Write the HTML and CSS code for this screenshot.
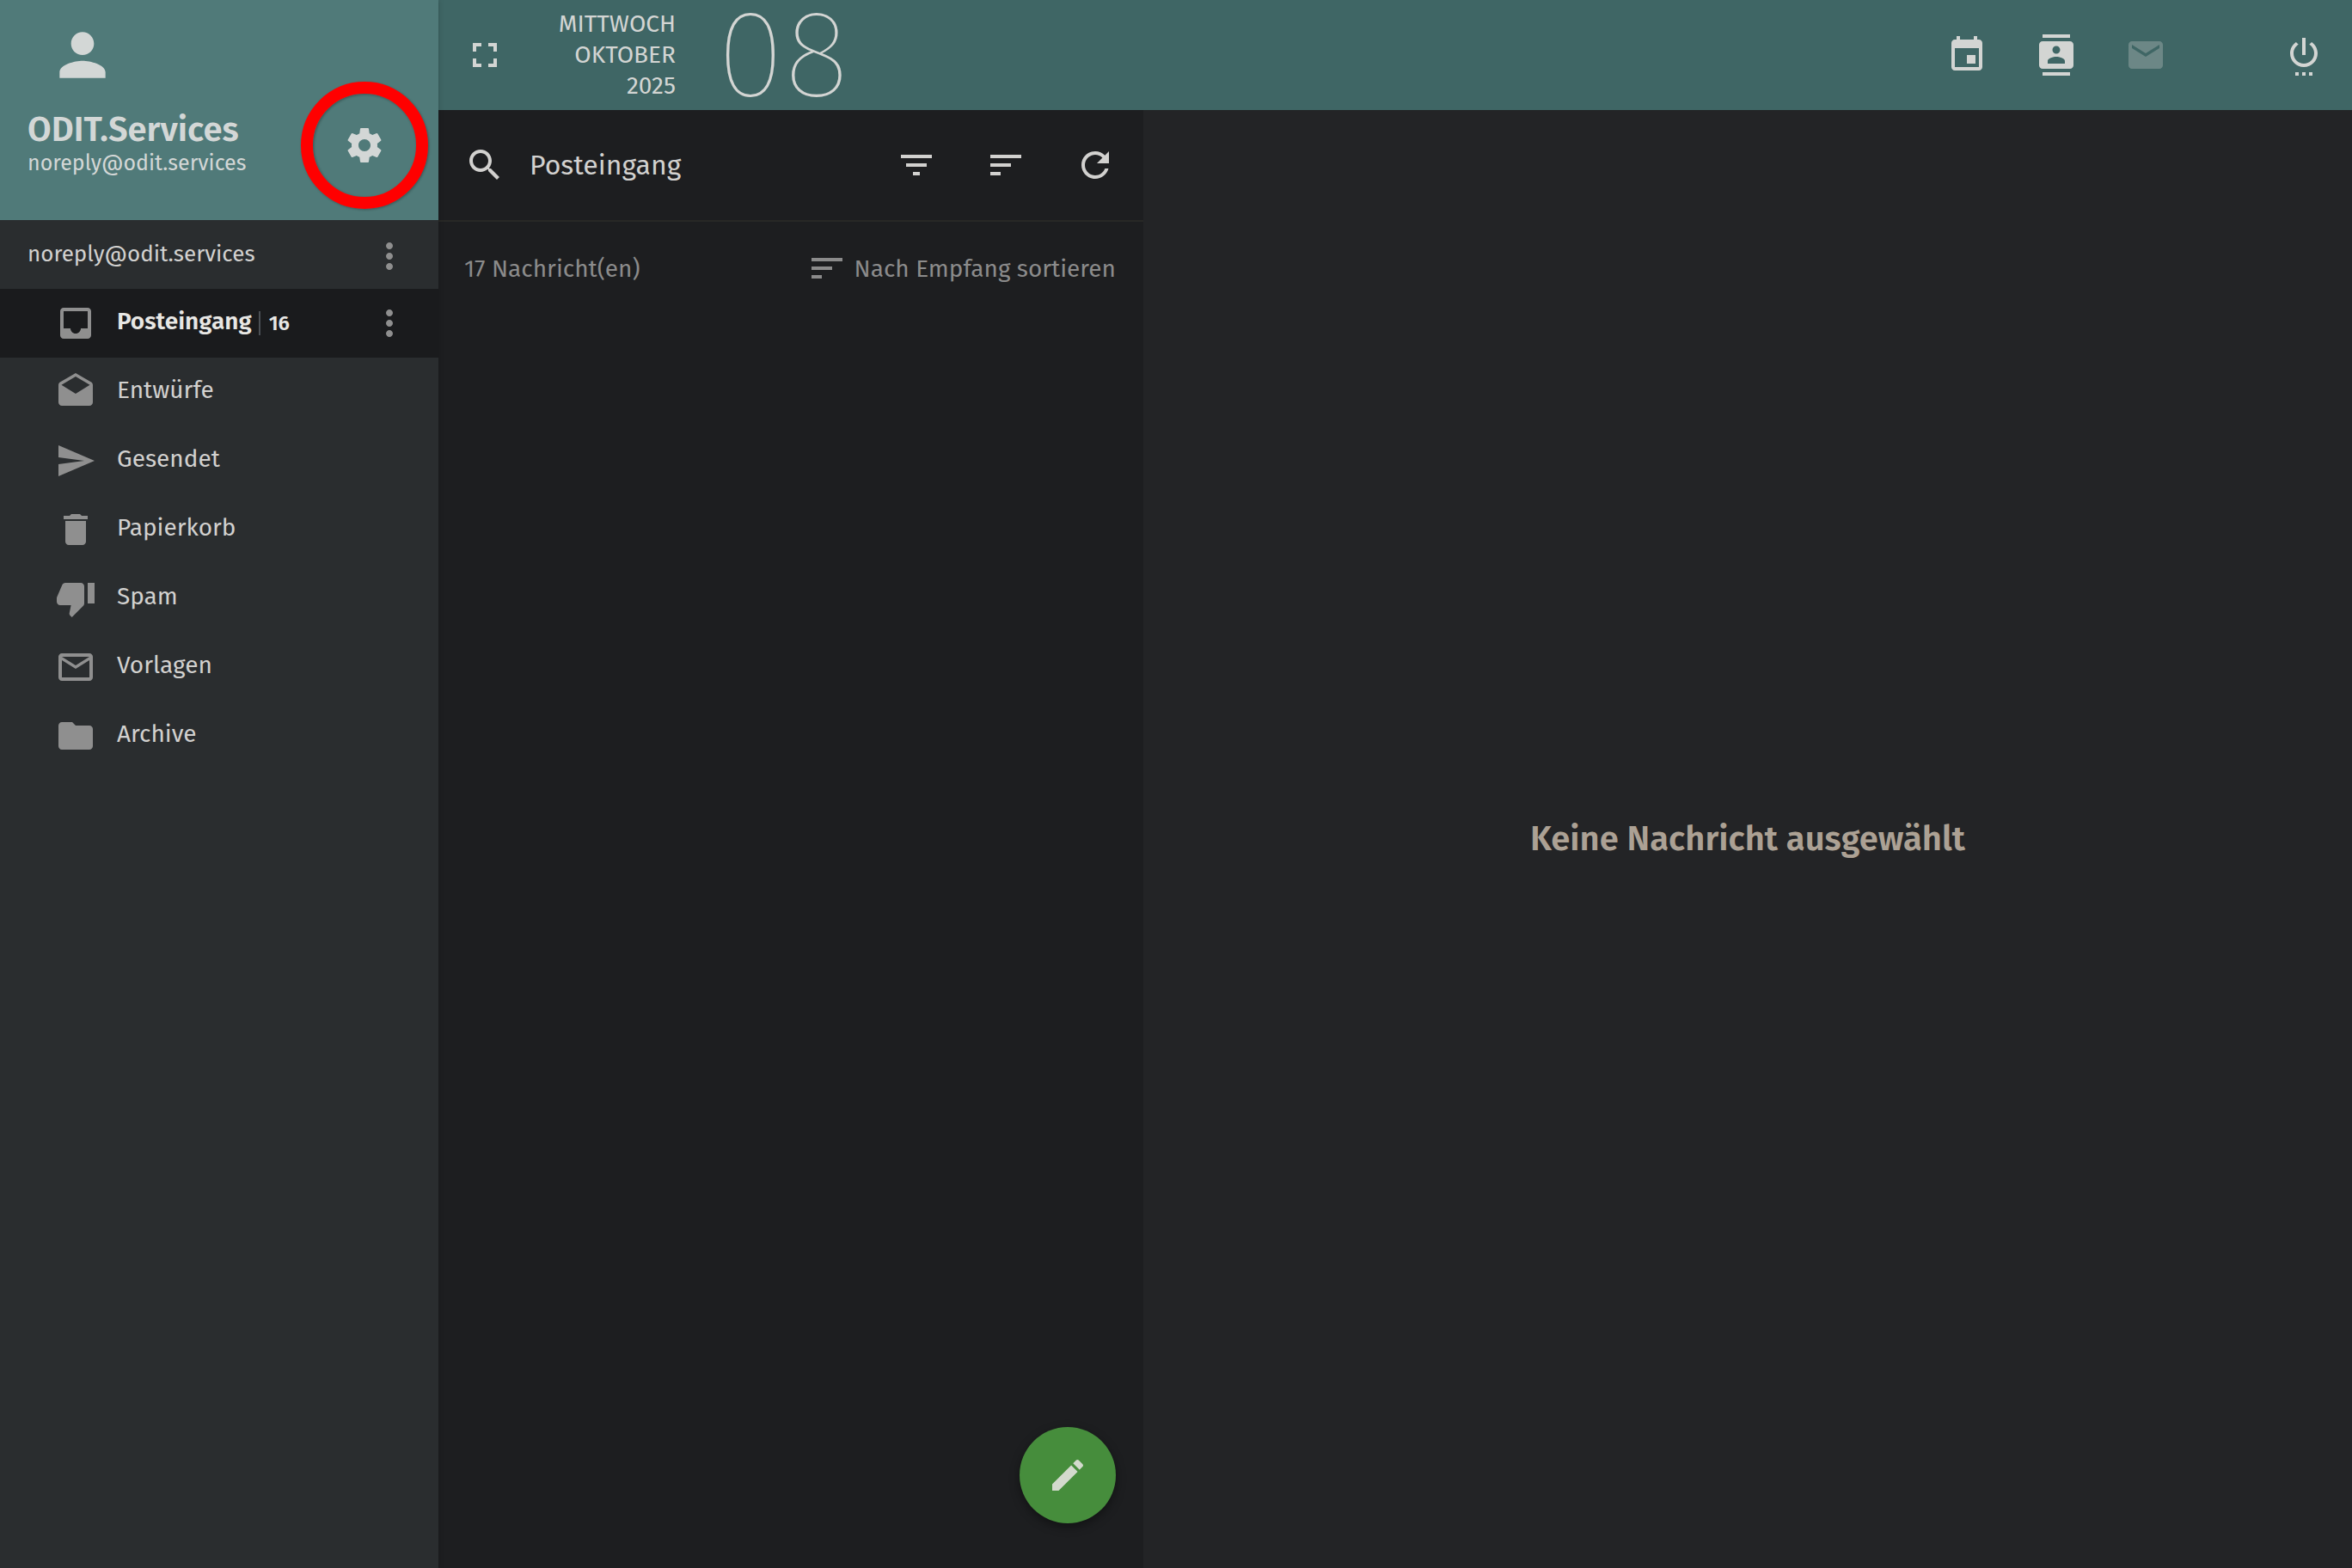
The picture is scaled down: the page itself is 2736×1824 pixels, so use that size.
FILE: index.html
```html
<!DOCTYPE html>
<html lang="de">
<head>
    <meta charset="UTF-8">
    <meta name="viewport" content="width=device-width, initial-scale=1.0">
    <title>Posteingang</title>
    <link rel="stylesheet" href="styles.css">
</head>
<body>
  <div class="app">
    <aside class="sidebar">
      <header class="profile">
        <svg class="avatar" viewBox="0 0 24 24"><path d="M12 12c2.21 0 4-1.79 4-4s-1.79-4-4-4-4 1.79-4 4 1.79 4 4 4zm0 2c-2.67 0-8 1.34-8 4v2h16v-2c0-2.66-5.33-4-8-4z"/></svg>
        <div class="profile-name">ODIT.Services</div>
        <div class="profile-mail">noreply@odit.services</div>
        <button class="settings" aria-label="Einstellungen">
          <svg class="icon" viewBox="0 0 24 24"><path d="M19.43 12.98c.04-.32.07-.64.07-.98s-.03-.66-.07-.98l2.11-1.65c.19-.15.24-.42.12-.64l-2-3.46c-.12-.22-.39-.3-.61-.22l-2.49 1c-.52-.4-1.08-.73-1.69-.98l-.38-2.65C14.46 2.18 14.25 2 14 2h-4c-.25 0-.46.18-.49.42l-.38 2.65c-.61.25-1.17.59-1.69.98l-2.49-1c-.23-.09-.49 0-.61.22l-2 3.46c-.13.22-.07.49.12.64l2.11 1.65c-.04.32-.07.65-.07.98s.03.66.07.98l-2.11 1.65c-.19.15-.24.42-.12.64l2 3.46c.12.22.39.3.61.22l2.49-1c.52.4 1.08.73 1.69.98l.38 2.65c.03.24.24.42.49.42h4c.25 0 .46-.18.49-.42l.38-2.65c.61-.25 1.17-.59 1.69-.98l2.49 1c.23.09.49 0 .61-.22l2-3.46c.12-.22.07-.49-.12-.64l-2.11-1.65zM12 15.5c-1.93 0-3.5-1.57-3.5-3.5s1.57-3.5 3.5-3.5 3.5 1.57 3.5 3.5-1.57 3.5-3.5 3.5z"/></svg>
        </button>
      </header>

      <div class="account">
        <span class="label">noreply@odit.services</span>
        <button class="more" aria-label="Konto-Menü">
          <svg class="icon" viewBox="0 0 24 24"><path d="M12 8c1.1 0 2-.9 2-2s-.9-2-2-2-2 .9-2 2 .9 2 2 2zm0 2c-1.1 0-2 .9-2 2s.9 2 2 2 2-.9 2-2-.9-2-2-2zm0 6c-1.1 0-2 .9-2 2s.9 2 2 2 2-.9 2-2-.9-2-2-2z"/></svg>
        </button>
      </div>

      <nav class="folders">
        <div class="folder active">
          <a href="#posteingang">
            <svg class="icon" viewBox="0 0 24 24"><path d="M19 3H4.99c-1.11 0-1.98.9-1.98 2L3 19c0 1.1.88 2 1.99 2H19c1.1 0 2-.9 2-2V5c0-1.1-.9-2-2-2zm0 12h-4c0 1.66-1.35 3-3 3s-3-1.34-3-3H4.99V5H19v10z"/></svg>
            <span class="label">Posteingang</span>
            <span class="count">16</span>
          </a>
          <button class="more" aria-label="Ordner-Menü">
            <svg class="icon" viewBox="0 0 24 24"><path d="M12 8c1.1 0 2-.9 2-2s-.9-2-2-2-2 .9-2 2 .9 2 2 2zm0 2c-1.1 0-2 .9-2 2s.9 2 2 2 2-.9 2-2-.9-2-2-2zm0 6c-1.1 0-2 .9-2 2s.9 2 2 2 2-.9 2-2-.9-2-2-2z"/></svg>
          </button>
        </div>
        <div class="folder">
          <a href="#entwuerfe">
            <svg class="icon" viewBox="0 0 24 24"><path d="M21.99 8c0-.72-.37-1.35-.94-1.7L12 1 2.95 6.3C2.38 6.65 2 7.28 2 8v10c0 1.1.9 2 2 2h16c1.1 0 2-.9 2-2l-.01-10zM12 13L3.74 7.84 12 3l8.26 4.84L12 13z"/></svg>
            <span class="label">Entwürfe</span>
          </a>
        </div>
        <div class="folder">
          <a href="#gesendet">
            <svg class="icon" viewBox="0 0 24 24"><path d="M2 21l21-9L2 3v7l15 2-15 2z"/></svg>
            <span class="label">Gesendet</span>
          </a>
        </div>
        <div class="folder">
          <a href="#papierkorb">
            <svg class="icon" viewBox="0 0 24 24"><path d="M6 19c0 1.1.9 2 2 2h8c1.1 0 2-.9 2-2V7H6v12zM19 4h-3.5l-1-1h-5l-1 1H5v2h14V4z"/></svg>
            <span class="label">Papierkorb</span>
          </a>
        </div>
        <div class="folder">
          <a href="#spam">
            <svg class="icon" viewBox="0 0 24 24"><path d="M15 3H6c-.83 0-1.54.5-1.84 1.22l-3.02 7.05c-.09.23-.14.47-.14.73v2c0 1.1.9 2 2 2h6.31l-.95 4.57-.03.32c0 .41.17.79.44 1.06L9.83 23l6.59-6.59c.36-.36.58-.86.58-1.41V5c0-1.1-.9-2-2-2zm4 0v12h4V3h-4z"/></svg>
            <span class="label">Spam</span>
          </a>
        </div>
        <div class="folder">
          <a href="#vorlagen">
            <svg class="icon" viewBox="0 0 24 24"><path d="M20 4H4c-1.1 0-1.99.9-1.99 2L2 18c0 1.1.9 2 2 2h16c1.1 0 2-.9 2-2V6c0-1.1-.9-2-2-2zm0 14H4V8l8 5 8-5v10zm-8-7L4 6h16l-8 5z"/></svg>
            <span class="label">Vorlagen</span>
          </a>
        </div>
        <div class="folder">
          <a href="#archive">
            <svg class="icon" viewBox="0 0 24 24"><path d="M10 4H4c-1.1 0-1.99.9-1.99 2L2 18c0 1.1.9 2 2 2h16c1.1 0 2-.9 2-2V8c0-1.1-.9-2-2-2h-8l-2-2z"/></svg>
            <span class="label">Archive</span>
          </a>
        </div>
      </nav>
    </aside>

    <div class="main">
      <header class="topbar">
        <button aria-label="Vollbild">
          <svg class="icon" viewBox="0 0 24 24"><path d="M7 14H5v5h5v-2H7v-3zm-2-4h2V7h3V5H5v5zm12 7h-3v2h5v-5h-2v3zM14 5v2h3v3h2V5h-5z"/></svg>
        </button>
        <div class="date">
          <span>MITTWOCH</span>
          <span>OKTOBER</span>
          <span>2025</span>
        </div>
        <div class="day">08</div>
        <nav class="apps">
          <button aria-label="Kalender">
            <svg class="icon" viewBox="0 0 24 24"><path d="M17 12h-5v5h5v-5zM16 1v2H8V1H6v2H5c-1.11 0-1.99.9-1.99 2L3 19c0 1.1.89 2 2 2h14c1.1 0 2-.9 2-2V5c0-1.1-.9-2-2-2h-1V1h-2zm3 18H5V8h14v11z"/></svg>
          </button>
          <button aria-label="Kontakte">
            <svg class="icon" viewBox="0 0 24 24"><path d="M20 0H4v2h16V0zM4 24h16v-2H4v2zM20 4H4c-1.1 0-2 .9-2 2v12c0 1.1.9 2 2 2h16c1.1 0 2-.9 2-2V6c0-1.1-.9-2-2-2zm-8 2.75c1.24 0 2.25 1.01 2.25 2.25s-1.01 2.25-2.25 2.25S9.75 10.24 9.75 9 10.76 6.75 12 6.75zM17 17H7v-1.5c0-1.67 3.33-2.5 5-2.5s5 .83 5 2.5V17z"/></svg>
          </button>
          <button aria-label="E-Mail" disabled>
            <svg class="icon" viewBox="0 0 24 24"><path d="M20 4H4c-1.1 0-1.99.9-1.99 2L2 18c0 1.1.9 2 2 2h16c1.1 0 2-.9 2-2V6c0-1.1-.9-2-2-2zm0 4l-8 5-8-5V6l8 5 8-5v2z"/></svg>
          </button>
          <button class="logout" aria-label="Abmelden">
            <svg class="icon" viewBox="0 0 24 24"><path d="M7 24h2v-2H7v2zm4 0h2v-2h-2v2zm2-22h-2v10h2V2zm3.56 2.44l-1.45 1.45C16.84 6.94 18 8.83 18 11c0 3.31-2.69 6-6 6s-6-2.69-6-6c0-2.17 1.16-4.06 2.88-5.12L7.44 4.44C5.36 5.88 4 8.28 4 11c0 4.42 3.58 8 8 8s8-3.58 8-8c0-2.72-1.36-5.12-3.44-6.56zM15 24h2v-2h-2v2z"/></svg>
          </button>
        </nav>
      </header>

      <div class="content">
        <section class="list">
          <div class="toolbar">
            <button aria-label="Suchen">
              <svg class="icon" viewBox="0 0 24 24"><path d="M15.5 14h-.79l-.28-.27C15.41 12.59 16 11.11 16 9.5 16 5.91 13.09 3 9.5 3S3 5.91 3 9.5 5.91 16 9.5 16c1.61 0 3.09-.59 4.23-1.57l.27.28v.79l5 4.99L20.49 19l-4.99-5zm-6 0C7.01 14 5 11.99 5 9.5S7.01 5 9.5 5 14 7.01 14 9.5 11.99 14 9.5 14z"/></svg>
            </button>
            <h1>Posteingang</h1>
            <button aria-label="Filtern">
              <svg class="icon" viewBox="0 0 24 24"><path d="M10 18h4v-2h-4v2zM3 6v2h18V6H3zm3 7h12v-2H6v2z"/></svg>
            </button>
            <button aria-label="Sortieren">
              <svg class="icon" viewBox="0 0 24 24"><path d="M3 18h6v-2H3v2zM3 6v2h18V6H3zm0 7h12v-2H3v2z"/></svg>
            </button>
            <button aria-label="Aktualisieren">
              <svg class="icon" viewBox="0 0 24 24"><path d="M17.65 6.35C16.2 4.9 14.21 4 12 4c-4.42 0-7.99 3.58-7.99 8s3.57 8 7.99 8c3.73 0 6.84-2.55 7.73-6h-2.08c-.82 2.33-3.04 4-5.65 4-3.31 0-6-2.69-6-6s2.69-6 6-6c1.66 0 3.14.69 4.22 1.78L13 11h7V4l-2.35 2.35z"/></svg>
            </button>
          </div>
          <div class="summary">
            <span>17 Nachricht(en)</span>
            <button class="sort">
              <svg class="icon" viewBox="0 0 24 24"><path d="M3 18h6v-2H3v2zM3 6v2h18V6H3zm0 7h12v-2H3v2z"/></svg>
              Nach Empfang sortieren
            </button>
          </div>
          <button class="compose" aria-label="Neue Nachricht">
            <svg class="icon" viewBox="0 0 24 24"><path d="M3 17.25V21h3.75L17.81 9.94l-3.75-3.75L3 17.25zM20.71 7.04c.39-.39.39-1.02 0-1.41l-2.34-2.34c-.39-.39-1.02-.39-1.41 0l-1.83 1.83 3.75 3.75 1.83-1.83z"/></svg>
          </button>
        </section>
        <main class="preview">
          <p>Keine Nachricht ausgewählt</p>
        </main>
      </div>
    </div>
  </div>
</body>
</html>
```

FILE: styles.css
```css
*{
  box-sizing: border-box;
}
body,html{
  height: 100%;
  margin: 0;
}
body{
  background: #232426;
  color: #d2d1cf;
  font-family: "Fira Sans", "Noto Sans", sans-serif;
  font-size: 28px;
}
button{
  display: flex;
  align-items: center;
  justify-content: center;
  padding: 0;
  border: none;
  background: none;
  color: inherit;
  font: inherit;
  cursor: pointer;
}
a{
  color: inherit;
  text-decoration: none;
}
svg{
  display: block;
  fill: currentColor;
}
.icon{
  width: 48px;
  height: 48px;
  flex: none;
}
.app{
  display: flex;
  min-height: 100%;
}

/* sidebar */
.sidebar{
  flex: 0 0 510px;
  position: relative;
  z-index: 1;
  background: #2a2d2f;
  box-shadow: 0 0 6px rgba(0,0,0,.2);
}
.profile{
  position: relative;
  height: 256px;
  padding: 24px 32px;
  background: #507a79;
  color: #d3d7d6;
}
.avatar{
  width: 80px;
  height: 80px;
  margin: 0 24px 22px;
}
.profile-name{
  font-size: 40px;
  font-weight: 600;
  line-height: 50px;
}
.profile-mail{
  font-size: 25px;
  line-height: 28px;
}
/* red ring over the header */
.settings{
  position: absolute;
  right: 12px;
  top: 95px;
  width: 148px;
  height: 148px;
  border: 14px solid #f00;
  border-radius: 50%;
  box-shadow: 1px 1px 3px rgba(0,0,0,.3), inset 1px 1px 3px rgba(0,0,0,.3);
}
.account,
.folder{
  display: flex;
  align-items: center;
  height: 80px;
  padding-right: 33px;
}
.account{
  padding-top: 4px;
  padding-left: 32px;
  font-size: 26px;
}
.account .label{
  flex: 1;
}
.label{
  padding-bottom: 6px;
}
.folder a{
  flex: 1;
  display: flex;
  align-items: center;
  height: 80px;
  padding-left: 64px;
}
.folder .icon,
.more{
  color: #8f8f8f;
}
.folder .label{
  margin-left: 24px;
}
.folder.active{
  background: #1a1b1d;
  color: #e8e7e4;
  font-weight: 600;
}
.count{
  margin-left: 8px;
  padding-left: 10px;
  border-left: 2px solid #4b5055;
  font-size: 24px;
  line-height: 28px;
}

/* top bar */
.main{
  flex: 1;
  display: flex;
  flex-direction: column;
}
.topbar{
  display: flex;
  align-items: center;
  height: 128px;
  padding: 0 32px 0 30px;
  background: #3f6665;
  color: #d3d5d3;
}
.date{
  display: flex;
  flex-direction: column;
  width: 198px;
  line-height: 36px;
  text-align: right;
}
.day{
  margin-left: 48px;
  font-size: 144px;
  font-weight: 100;
  line-height: 128px;
}
.apps{
  display: flex;
  gap: 56px;
  margin-left: auto;
}
.apps button:disabled{
  opacity: .3;
}
.logout{
  margin-left: 80px;
}

/* message list */
.content{
  flex: 1;
  display: flex;
}
.list{
  flex: 0 0 820px;
  position: relative;
  background: #1d1e20;
}
.toolbar{
  display: flex;
  align-items: center;
  gap: 56px;
  height: 130px;
  padding: 0 32px 0 30px;
  border-bottom: 2px solid #282826;
}
.toolbar h1{
  flex: 1;
  margin: 0 0 0 -28px;
  font-size: 32px;
  font-weight: 400;
}
.summary{
  display: flex;
  align-items: center;
  justify-content: space-between;
  padding: 30px 32px 30px 30px;
  color: #8b8b8b;
}
.sort{
  gap: 8px;
}
.compose{
  position: absolute;
  right: 32px;
  bottom: 52px;
  width: 112px;
  height: 112px;
  border-radius: 50%;
  background: #468d3c;
  color: #d3dacd;
  box-shadow: 0 4px 12px rgba(0,0,0,.4);
}

/* message preview */
.preview{
  flex: 1;
  display: flex;
  align-items: center;
  justify-content: center;
}
.preview p{
  margin: 0;
  color: #aca194;
  font-size: 40px;
  font-weight: 600;
}
```
